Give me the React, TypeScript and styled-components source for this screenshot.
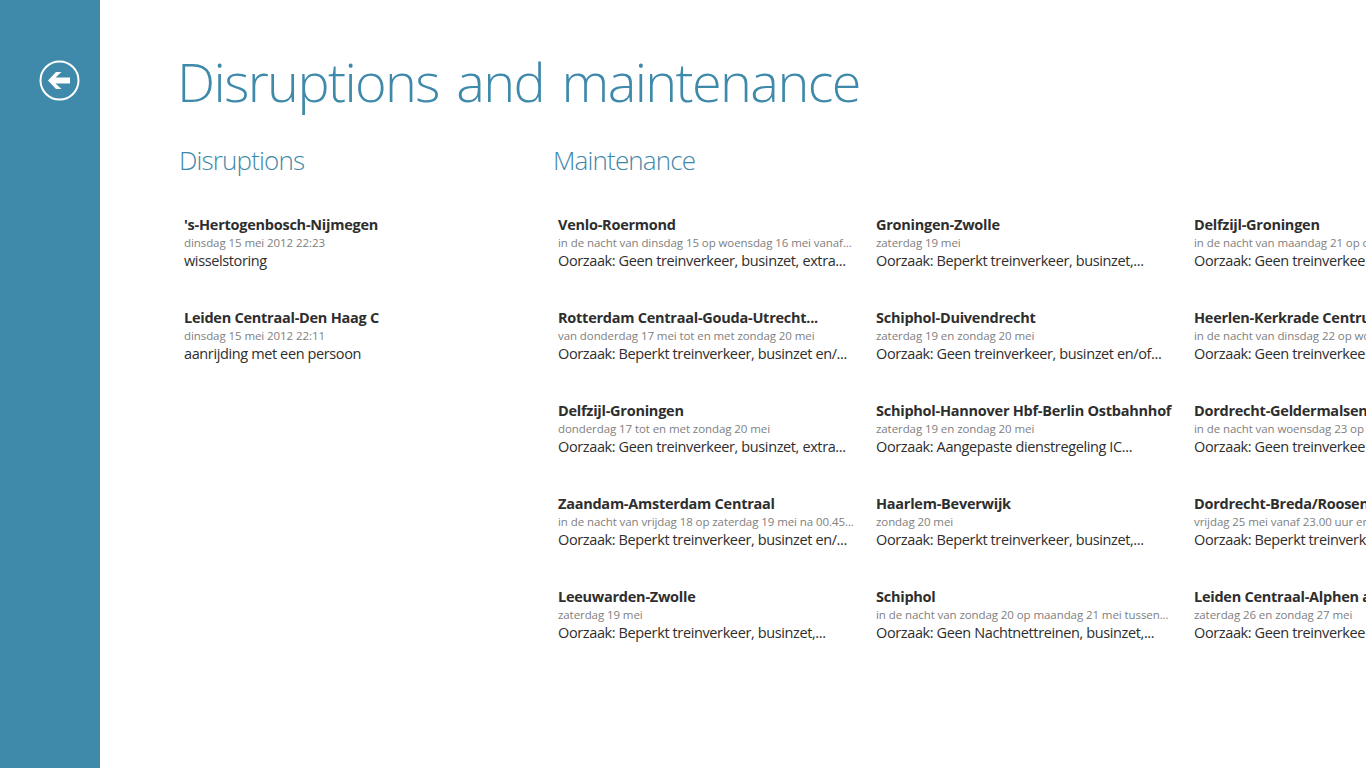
import styled, { createGlobalStyle } from "styled-components";

type Notice = { title: string; date: string; text: string };

const disruptions: Notice[] = [
  { title: "'s-Hertogenbosch-Nijmegen", date: "dinsdag 15 mei 2012 22:23", text: "wisselstoring" },
  { title: "Leiden Centraal-Den Haag C", date: "dinsdag 15 mei 2012 22:11", text: "aanrijding met een persoon" },
];

const maintenance: Notice[] = [
  { title: "Venlo-Roermond", date: "in de nacht van dinsdag 15 op woensdag 16 mei vanaf...", text: "Oorzaak: Geen treinverkeer, businzet, extra..." },
  { title: "Rotterdam Centraal-Gouda-Utrecht...", date: "van donderdag 17 mei tot en met zondag 20 mei", text: "Oorzaak: Beperkt treinverkeer, businzet en/..." },
  { title: "Delfzijl-Groningen", date: "donderdag 17 tot en met zondag 20 mei", text: "Oorzaak: Geen treinverkeer, businzet, extra..." },
  { title: "Zaandam-Amsterdam Centraal", date: "in de nacht van vrijdag 18 op zaterdag 19 mei na 00.45...", text: "Oorzaak: Beperkt treinverkeer, businzet en/..." },
  { title: "Leeuwarden-Zwolle", date: "zaterdag 19 mei", text: "Oorzaak: Beperkt treinverkeer, businzet,..." },
  { title: "Groningen-Zwolle", date: "zaterdag 19 mei", text: "Oorzaak: Beperkt treinverkeer, businzet,..." },
  { title: "Schiphol-Duivendrecht", date: "zaterdag 19 en zondag 20 mei", text: "Oorzaak: Geen treinverkeer, businzet en/of..." },
  { title: "Schiphol-Hannover Hbf-Berlin Ostbahnhof", date: "zaterdag 19 en zondag 20 mei", text: "Oorzaak: Aangepaste dienstregeling IC..." },
  { title: "Haarlem-Beverwijk", date: "zondag 20 mei", text: "Oorzaak: Beperkt treinverkeer, businzet,..." },
  { title: "Schiphol", date: "in de nacht van zondag 20 op maandag 21 mei tussen...", text: "Oorzaak: Geen Nachtnettreinen, businzet,..." },
  { title: "Delfzijl-Groningen", date: "in de nacht van maandag 21 op dinsdag 22 mei", text: "Oorzaak: Geen treinverkeer, businzet" },
  { title: "Heerlen-Kerkrade Centrum", date: "in de nacht van dinsdag 22 op woensdag 23 mei", text: "Oorzaak: Geen treinverkeer, businzet" },
  { title: "Dordrecht-Geldermalsen", date: "in de nacht van woensdag 23 op donderdag 24 mei", text: "Oorzaak: Geen treinverkeer, businzet" },
  { title: "Dordrecht-Breda/Roosendaal", date: "vrijdag 25 mei vanaf 23.00 uur en zaterdag 26 mei", text: "Oorzaak: Beperkt treinverkeer, businzet" },
  { title: "Leiden Centraal-Alphen a/d Rijn", date: "zaterdag 26 en zondag 27 mei", text: "Oorzaak: Geen treinverkeer, businzet" },
];

function NoticeItem({ notice }: { notice: Notice }) {
  return (
    <Item>
      <ItemTitle>{notice.title}</ItemTitle>
      <ItemDate>{notice.date}</ItemDate>
      <ItemText>{notice.text}</ItemText>
    </Item>
  );
}

export default function App() {
  return (
    <Page>
      <GlobalStyle />
      <Sidebar>
        <BackButton aria-label="Back">
          <svg width="41" height="41" viewBox="0 0 41 41" fill="none">
            <circle cx="20.5" cy="20.5" r="19" stroke="#fff" strokeWidth="2" />
            <path d="M9 20.5 L17 12 H22.5 L16.5 17.5 H31 V23.5 H16.5 L22.5 29 H17 Z" fill="#fff" />
          </svg>
        </BackButton>
      </Sidebar>
      <Content>
        <Title>Disruptions and maintenance</Title>
        <Groups>
          <DisruptionGroup>
            <GroupTitle>Disruptions</GroupTitle>
            <List>
              {disruptions.map((n) => (
                <NoticeItem key={n.title} notice={n} />
              ))}
            </List>
          </DisruptionGroup>
          <section>
            <GroupTitle>Maintenance</GroupTitle>
            <List>
              {maintenance.map((n) => (
                <NoticeItem key={n.title + n.date} notice={n} />
              ))}
            </List>
          </section>
        </Groups>
      </Content>
    </Page>
  );
}

const GlobalStyle = createGlobalStyle`
  html, body {
    margin: 0;
    height: 100%;
    overflow: hidden;
    background: #fff;
  }
`;

const Page = styled.div`
  display: flex;
  width: 1366px;
  height: 768px;
  overflow: hidden;
  font-family: "Open Sans", "Noto Sans", sans-serif;
`;

const Sidebar = styled.aside`
  flex: 0 0 100px;
  background: #3f89aa;
  padding: 60px 0 0 39px;
  box-sizing: border-box;
`;

const BackButton = styled.button`
  display: block;
  width: 41px;
  height: 41px;
  padding: 0;
  border: none;
  background: none;
`;

const Content = styled.main`
  flex: 1;
  min-width: 0;
  padding: 43px 0 0 77px;
`;

const Title = styled.h1`
  margin: 0;
  font-size: 54px;
  line-height: 76px;
  font-weight: 300;
  color: #3f89aa;
  white-space: nowrap;
  letter-spacing: -1.6px;
  word-spacing: 5px;
`;

const Groups = styled.div`
  display: flex;
  margin-top: 21px;
  margin-left: 2px;
`;

const DisruptionGroup = styled.section`
  flex: 0 0 374px;
`;

const GroupTitle = styled.h2`
  margin: 0;
  font-size: 26px;
  line-height: 40px;
  font-weight: 300;
  color: #3f89aa;
  letter-spacing: -0.85px;
`;

const List = styled.div`
  display: grid;
  grid-template-rows: repeat(5, 93px);
  grid-auto-flow: column;
  grid-auto-columns: 318px;
  margin-top: 35px;
  padding-left: 5px;
`;

const Item = styled.article`
  display: flex;
  flex-direction: column;
  white-space: nowrap;
`;

const ItemTitle = styled.div`
  font-size: 14.5px;
  line-height: 20px;
  font-weight: 700;
  color: #2e2e2e;
  letter-spacing: -0.25px;
`;

const ItemDate = styled.div`
  font-size: 11.5px;
  line-height: 16px;
  color: #808080;
  letter-spacing: -0.08px;
`;

const ItemText = styled.div`
  font-size: 14.5px;
  line-height: 20px;
  color: #2e2e2e;
  letter-spacing: -0.38px;
`;
